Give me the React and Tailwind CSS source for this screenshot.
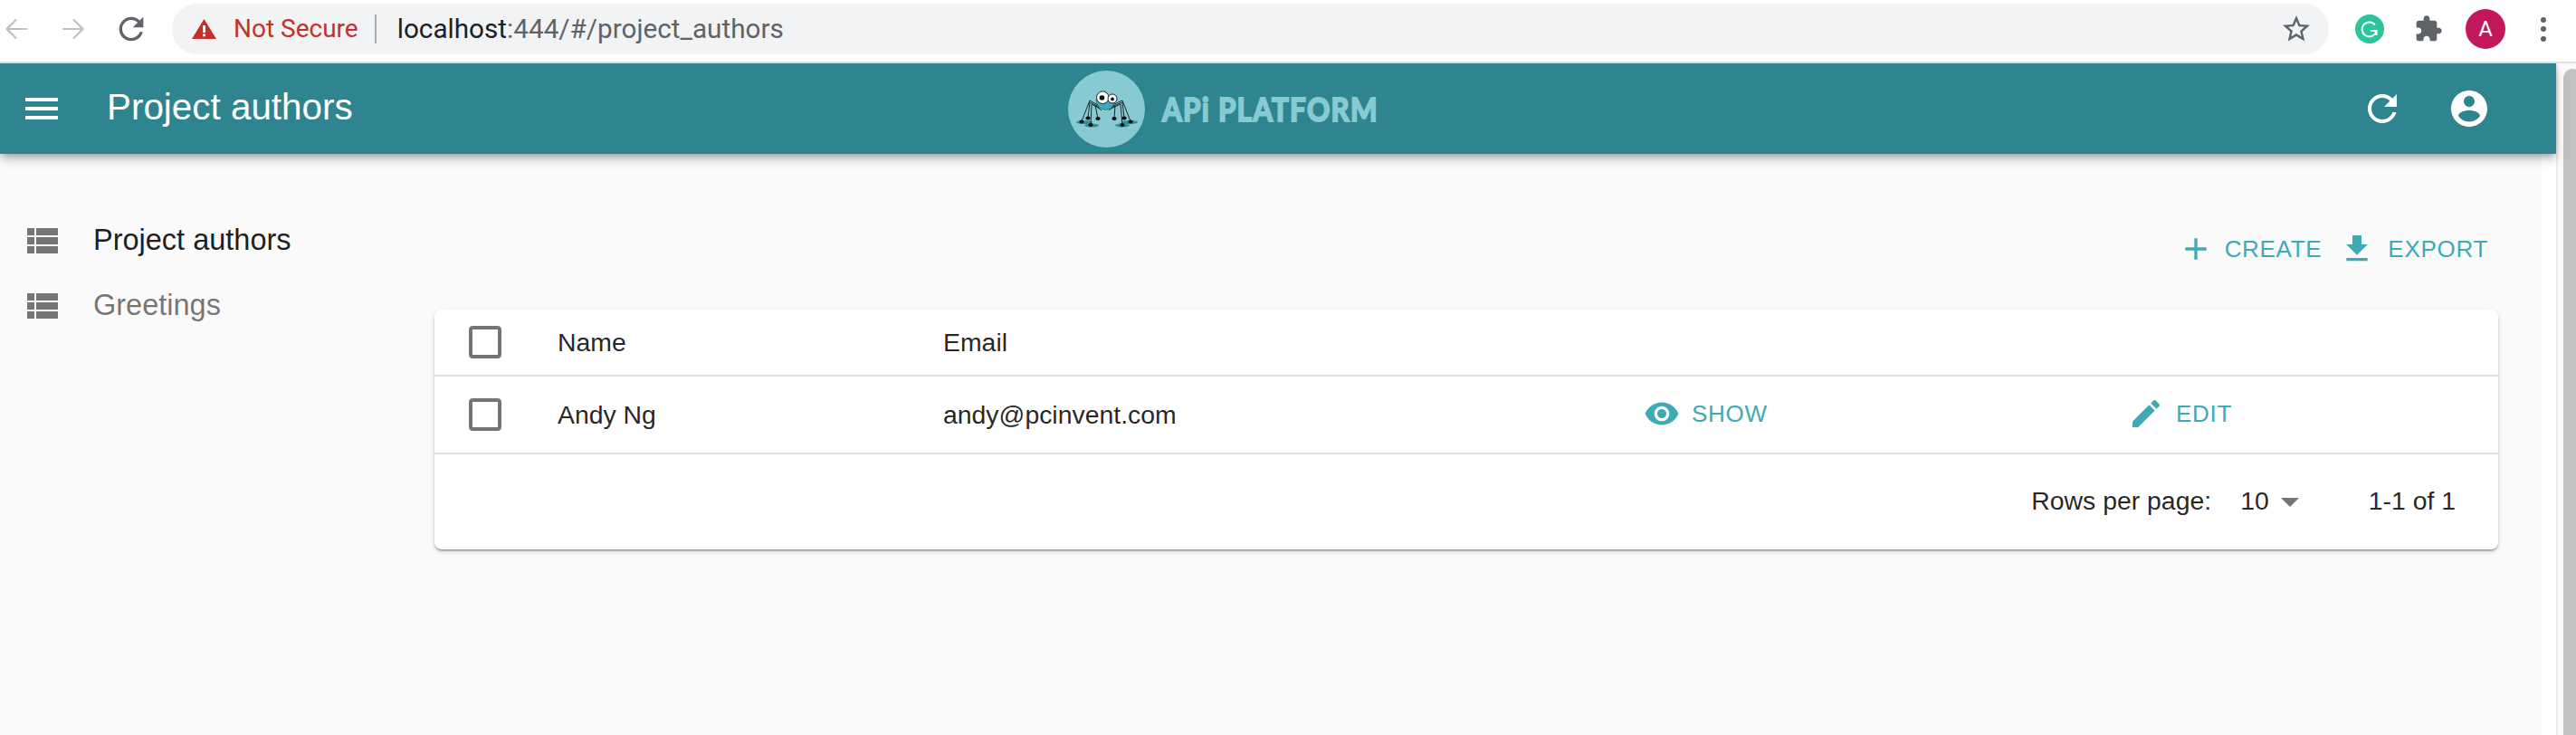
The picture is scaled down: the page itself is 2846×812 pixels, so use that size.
const P = {
  add: "M19 13h-6v6h-2v-6H5v-2h6V5h2v6h6v2z",
  getApp: "M19 9h-4V3H9v6H5l7 7 7-7zM5 18v2h14v-2H5z",
  refresh: "M17.65 6.35C16.2 4.9 14.21 4 12 4c-4.42 0-7.99 3.58-7.99 8s3.57 8 7.99 8c3.73 0 6.84-2.55 7.73-6h-2.08c-.82 2.33-3.04 4-5.65 4-3.31 0-6-2.69-6-6s2.69-6 6-6c1.66 0 3.14.69 4.22 1.78L13 11h7V4l-2.35 2.35z",
  account: "M12 2C6.48 2 2 6.48 2 12s4.48 10 10 10 10-4.48 10-10S17.52 2 12 2zm0 3c1.66 0 3 1.34 3 3s-1.34 3-3 3-3-1.34-3-3 1.34-3 3-3zm0 14.2c-2.5 0-4.71-1.28-6-3.22.03-1.99 4-3.08 6-3.08 1.99 0 5.97 1.09 6 3.08-1.29 1.94-3.5 3.22-6 3.22z",
  menu: "M3 18h18v-2H3v2zm0-5h18v-2H3v2zm0-7v2h18V6H3z",
  check: "M19 5v14H5V5h14m0-2H5c-1.1 0-2 .9-2 2v14c0 1.1.9 2 2 2h14c1.1 0 2-.9 2-2V5c0-1.1-.9-2-2-2z",
  eye: "M12 4.5C7 4.5 2.73 7.61 1 12c1.73 4.39 6 7.5 11 7.5s9.27-3.11 11-7.5c-1.73-4.39-6-7.5-11-7.5zM12 17c-2.76 0-5-2.24-5-5s2.24-5 5-5 5 2.24 5 5-2.24 5-5 5zm0-8c-1.66 0-3 1.34-3 3s1.34 3 3 3 3-1.34 3-3-1.34-3-3-3z",
  edit: "M3 17.25V21h3.75L17.81 9.94l-3.75-3.75L3 17.25zM20.71 7.04c.39-.39.39-1.02 0-1.41l-2.34-2.34c-.39-.39-1.02-.39-1.41 0l-1.83 1.83 3.75 3.75 1.83-1.83z",
  list: "M4 14h4v-4H4v4zm0 5h4v-4H4v4zM4 9h4V5H4v4zm5 5h12v-4H9v4zm0 5h12v-4H9v4zM9 5v4h12V5H9z",
  drop: "M7 10l5 5 5-5z",
  star: "M22 9.24l-7.19-.62L12 2 9.19 8.63 2 9.24l5.46 4.73L5.82 21 12 17.27 18.18 21l-1.63-7.03L22 9.24zM12 15.4l-3.76 2.27 1-4.28-3.32-2.88 4.38-.38L12 6.1l1.71 4.04 4.38.38-3.32 2.88 1 4.28L12 15.4z",
  ext: "M20.5 11H19V7c0-1.1-.9-2-2-2h-4V3.5C13 2.12 11.88 1 10.5 1S8 2.12 8 3.5V5H4c-1.1 0-1.99.9-1.99 2v3.8H3.5c1.49 0 2.7 1.21 2.7 2.7s-1.21 2.7-2.7 2.7H2V20c0 1.1.9 2 2 2h3.8v-1.5c0-1.49 1.21-2.7 2.7-2.7 1.49 0 2.7 1.21 2.7 2.7V22H17c1.1 0 2-.9 2-2v-4h1.5c1.38 0 2.5-1.12 2.5-2.5S21.88 11 20.5 11z",
};

function Icon({ d, className }) {
  return (
    <svg viewBox="0 0 24 24" fill="currentColor" className={className}>
      <path d={d} />
    </svg>
  );
}

function Spider() {
  const legs = [
    "M33 38L24 33L15 56",
    "M34 40L24 35L22 52",
    "M35 42L26 37L25 60",
    "M37 44L30 38L33 53",
    "M49 38L60 33L69 56",
    "M48 40L60 35L62 52",
    "M47 42L58 37L60 60",
    "M45 44L52 38L51 53",
  ];
  return (
    <svg viewBox="0 0 85 85" className="w-[85px] h-[85px] shrink-0">
      <circle cx="42.5" cy="42.5" r="42.5" fill="#87cad2" />
      <ellipse cx="18" cy="57" rx="9" ry="2" fill="#2f8f9c" />
      <ellipse cx="26" cy="60.5" rx="8" ry="2" fill="#2f8f9c" />
      <ellipse cx="60" cy="60.5" rx="8" ry="2" fill="#2f8f9c" />
      <ellipse cx="68" cy="57" rx="9" ry="2" fill="#2f8f9c" />
      {legs.map((d) => (
        <path key={d} d={d} fill="none" stroke="#1b2a30" strokeWidth="1" />
      ))}
      {[[15, 56.5], [22, 52.5], [25, 60], [33, 53], [51, 53], [60, 60], [62, 52.5], [69, 56.5]].map(([x, y]) => (
        <ellipse key={x} cx={x} cy={y} rx="2.6" ry="1.9" fill="#0b0b0b" />
      ))}
      <path d="M31 32C32 47 51 47 52 32Z" fill="#3fa9ba" stroke="#1b4a55" strokeWidth="0.5" />
      <circle cx="38.3" cy="29.7" r="6.8" fill="#fff" stroke="#111" strokeWidth="0.9" />
      <circle cx="49" cy="31" r="5" fill="#fff" stroke="#111" strokeWidth="0.9" />
      <circle cx="37.5" cy="30" r="2.8" fill="#111" />
      <circle cx="49" cy="31.5" r="1.9" fill="#111" />
    </svg>
  );
}

function BrowserBar() {
  return (
    <div className="h-[70px] shrink-0 bg-white border-b-2 border-[#dfe1e4] flex items-start font-['Roboto',sans-serif]">
      <div className="flex items-center h-[64px] pl-[5px] shrink-0 w-[190px]">
        <svg viewBox="0 0 26 24" fill="none" stroke="#bdc0c4" strokeWidth="2.2" className="w-[26px] h-[24px]">
          <path d="M25 12H3M13 1.5L2.5 12L13 22.5" />
        </svg>
        <svg viewBox="0 0 26 24" fill="none" stroke="#bdc0c4" strokeWidth="2.2" className="w-[26px] h-[24px] ml-[37px]">
          <path d="M1 12H23M13 1.5L23.5 12L13 22.5" />
        </svg>
        <Icon d={P.refresh} className="w-[40px] h-[40px] ml-[31px] text-[#5f6368]" />
      </div>
      <div className="mt-[4px] w-[2383px] h-[56px] rounded-full bg-[#f1f3f4] flex items-center pl-[22px] pr-[18px] shrink-0">
        <svg viewBox="0 0 27 22" className="w-[27px] h-[22px] shrink-0">
          <path d="M13.5 0L27 22H0Z" fill="#c5302b" />
          <rect x="12.2" y="7" width="2.8" height="8" fill="#fff" />
          <rect x="12.2" y="16.5" width="2.8" height="2.8" fill="#fff" />
        </svg>
        <span className="ml-[19px] text-[28px] leading-none text-[#c5302b]">Not Secure</span>
        <span className="ml-[18px] w-[2px] h-[32px] bg-[#a8abaf]" />
        <span className="ml-[23px] text-[29.7px] leading-none text-[#5f6368]">
          <span className="text-[#202124]">localhost</span>:444/#/project_authors
        </span>
        <Icon d={P.star} className="ml-auto w-[36px] h-[36px] text-[#5f6368]" />
      </div>
      <div className="flex items-center h-[64px] shrink-0">
        <span className="ml-[29px] w-[32px] h-[32px] rounded-full bg-[#2cc49a] flex items-center justify-center">
          <svg viewBox="0 0 20 20" fill="none" stroke="#fff" strokeWidth="2" className="w-[20px] h-[20px]">
            <path d="M16 5.5A8 8 0 1 0 17.5 12H11" />
            <path d="M17.5 17V12" />
          </svg>
        </span>
        <Icon d={P.ext} className="ml-[33px] w-[32px] h-[32px] text-[#5f6368]" />
        <span className="ml-[25px] w-[44px] h-[44px] rounded-full bg-[#c2185b] text-white text-[24px] flex items-center justify-center">A</span>
        <span className="ml-[39px] flex flex-col gap-[4.5px]">
          <span className="w-[6px] h-[6px] rounded-full bg-[#5f6368]" />
          <span className="w-[6px] h-[6px] rounded-full bg-[#5f6368]" />
          <span className="w-[6px] h-[6px] rounded-full bg-[#5f6368]" />
        </span>
      </div>
    </div>
  );
}

function AppBar() {
  return (
    <header className="relative z-10 h-[100px] shrink-0 bg-[#2e858f] text-white flex items-center pl-[22px] pr-[72px] shadow-[0_4px_8px_-2px_rgba(0,0,0,0.3),0_8px_10px_0_rgba(0,0,0,0.12)]">
      <Icon d={P.menu} className="w-[48px] h-[48px] shrink-0" />
      <h1 className="ml-[48px] w-[1062px] shrink-0 pb-[3px] text-[40.4px] leading-none font-normal">Project authors</h1>
      <Spider />
      <span className="ml-[19px] inline-block origin-left scale-x-[0.87] whitespace-nowrap text-[36px] leading-none font-bold font-['Lato',sans-serif] tracking-[1.5px] text-[#87cad2] [-webkit-text-stroke:2px_#87cad2]">
        APi PLATFORM
      </span>
      <div className="ml-auto flex items-center gap-[48px]">
        <Icon d={P.refresh} className="w-[48px] h-[48px]" />
        <Icon d={P.account} className="w-[48px] h-[48px]" />
      </div>
    </header>
  );
}

function Sidebar() {
  const items = [
    { label: "Project authors", cls: "text-[#000000e6]" },
    { label: "Greetings", cls: "text-[#0000008a]" },
  ];
  return (
    <nav className="w-[480px] shrink-0 pt-[60px]">
      {items.map((it) => (
        <div key={it.label} className="h-[72px] flex items-center pl-[22px]">
          <Icon d={P.list} className="w-[48px] h-[48px] text-[#757575] shrink-0" />
          <span className={`ml-[33px] pb-[2px] text-[32.5px] leading-none ${it.cls}`}>{it.label}</span>
        </div>
      ))}
    </nav>
  );
}

function ActionLink({ d, label, gap }) {
  return (
    <span className="flex items-center text-[#3eaab5] text-[26px] leading-none tracking-[0.7px]">
      <Icon d={d} className="w-[40px] h-[40px] shrink-0" />
      <span className={gap}>{label}</span>
    </span>
  );
}

function Table() {
  const Check = () => <Icon d={P.check} className="w-[48px] h-[48px] text-[#757575]" />;
  return (
    <div className="w-[2280px] h-[265px] bg-white rounded-lg overflow-hidden shadow-[0_2px_2px_-1px_rgba(0,0,0,0.3),0_2px_2px_0_rgba(0,0,0,0.14),0_2px_6px_0_rgba(0,0,0,0.12)] text-[28.4px] text-[#000000de]">
      <div className="h-[74px] border-b-2 border-[#e0e0e0] flex items-center">
        <div className="w-[136px] pl-[32px] shrink-0"><Check /></div>
        <div className="w-[426px] shrink-0">Name</div>
        <div>Email</div>
      </div>
      <div className="h-[86px] border-b-2 border-[#e0e0e0] flex items-center">
        <div className="w-[136px] pl-[32px] shrink-0"><Check /></div>
        <div className="w-[426px] shrink-0">Andy Ng</div>
        <div className="w-[774px] shrink-0">andy@pcinvent.com</div>
        <div className="w-[535px] shrink-0 pb-[2px]"><ActionLink d={P.eye} label="SHOW" gap="ml-[13px]" /></div>
        <div className="pb-[2px]"><ActionLink d={P.edit} label="EDIT" gap="ml-[13px]" /></div>
      </div>
      <div className="h-[105px] flex items-center justify-end pr-[47px] pb-[2px]">
        <span>Rows per page:</span>
        <span className="ml-[32px]">10</span>
        <Icon d={P.drop} className="w-[48px] h-[48px] text-[#757575] -ml-[1px]" />
        <span className="ml-[63px]">1-1 of 1</span>
      </div>
    </div>
  );
}

export default function App() {
  return (
    <div className="w-[2846px] h-[812px] overflow-hidden bg-white flex flex-col font-['Liberation_Sans',Arial,sans-serif]">
      <BrowserBar />
      <div className="flex-1 flex min-h-0">
        <div className="w-[2824px] flex flex-col shrink-0">
          <AppBar />
          <div className="flex-1 w-[2808px] bg-[#fafafa] flex">
            <Sidebar />
            <main className="flex-1 flex flex-col">
              <div className="h-[70px] mt-[70px] mb-[32px] flex items-center justify-end pr-[59px] gap-[19px]">
                <ActionLink d={P.add} label="CREATE" gap="ml-[12px]" />
                <ActionLink d={P.getApp} label="EXPORT" gap="ml-[14px]" />
              </div>
              <Table />
            </main>
          </div>
        </div>
        <div className="flex-1 border-l-2 border-[#ececec] bg-[#fafafa] pl-[6px] pt-[6px]">
          <div className="h-full w-[20px] rounded-t-full bg-[#c1c1c1]" />
        </div>
      </div>
    </div>
  );
}
